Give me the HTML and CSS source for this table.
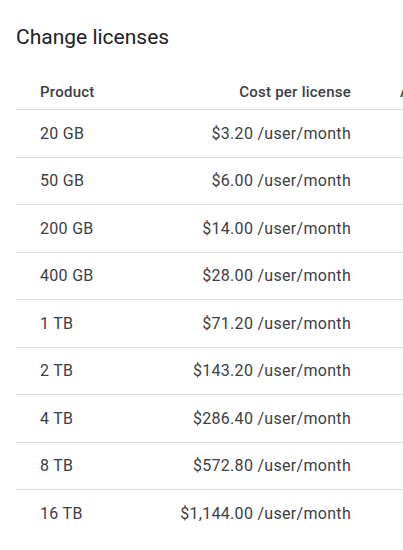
FILE: index.html
```html
<!DOCTYPE html>
<html>
<head>
<meta charset="utf-8">
<link rel="stylesheet" href="styles.css">
</head>
<body>
<div class="page">
  <h1 class="title">Change licenses</h1>
  <div class="table-wrap">
    <table class="lic">
      <thead>
        <tr><th class="c-prod">Product</th><th class="c-cost">Cost per license</th><th class="c-more">Assigned licenses</th></tr>
      </thead>
      <tbody>
        <tr><td class="c-prod">20 GB</td><td class="c-cost">$3.20 /user/month</td><td class="c-more"></td></tr>
        <tr><td class="c-prod">50 GB</td><td class="c-cost">$6.00 /user/month</td><td class="c-more"></td></tr>
        <tr><td class="c-prod">200 GB</td><td class="c-cost">$14.00 /user/month</td><td class="c-more"></td></tr>
        <tr><td class="c-prod">400 GB</td><td class="c-cost">$28.00 /user/month</td><td class="c-more"></td></tr>
        <tr><td class="c-prod">1 TB</td><td class="c-cost">$71.20 /user/month</td><td class="c-more"></td></tr>
        <tr><td class="c-prod">2 TB</td><td class="c-cost">$143.20 /user/month</td><td class="c-more"></td></tr>
        <tr><td class="c-prod">4 TB</td><td class="c-cost">$286.40 /user/month</td><td class="c-more"></td></tr>
        <tr><td class="c-prod">8 TB</td><td class="c-cost">$572.80 /user/month</td><td class="c-more"></td></tr>
        <tr><td class="c-prod">16 TB</td><td class="c-cost">$1,144.00 /user/month</td><td class="c-more"></td></tr>
      </tbody>
    </table>
  </div>
</div>
</body>
</html>
```
FILE: styles.css
```css
html, body {
  margin: 0;
  padding: 0;
  background: #fff;
}
body {
  font-family: Roboto, "Noto Sans", sans-serif;
  color: #3c4043;
  overflow: hidden;
}
.page {
  padding: 23px 0 0 16px;
}
.title {
  margin: 0;
  font-size: 21px;
  font-weight: 400;
  line-height: 28px;
  color: #202124;
}
.table-wrap {
  margin-top: 31px;
  overflow: hidden;
}
.lic {
  border-collapse: collapse;
  table-layout: fixed;
  width: 520px;
  font-size: 16px;
  letter-spacing: 0.3px;
}
.lic th {
  font-size: 15px;
  font-weight: 500;
  letter-spacing: 0.25px;
  color: #3c4043;
  line-height: 20px;
  padding: 0 0 7px 0;
  border-bottom: 1px solid #dadce0;
  vertical-align: bottom;
  white-space: nowrap;
}
.lic td {
  height: 46.5px;
  padding: 0;
  border-bottom: 1px solid #dadce0;
  white-space: nowrap;
}
.lic tbody tr:last-child td {
  border-bottom: none;
}
.c-prod {
  width: 110px;
  text-align: left;
  padding-left: 24px !important;
  box-sizing: border-box;
}
.c-cost {
  width: 225px;
  text-align: right;
}
.c-more {
  width: 185px;
  text-align: left;
  padding-left: 49px !important;
}
```
